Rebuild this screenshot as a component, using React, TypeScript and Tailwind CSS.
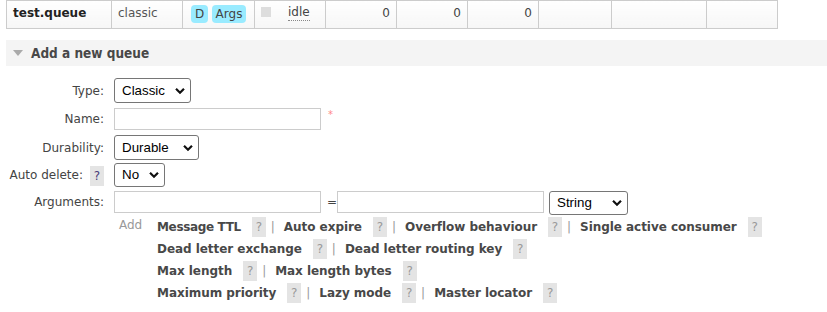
import React from "react";

function Chevron() {
  return (
    <svg width="10" height="7" viewBox="0 0 10 7" className="absolute right-[5px] top-1/2 -translate-y-1/2 pointer-events-none">
      <path d="M1 1.2 L5 5.2 L9 1.2" fill="none" stroke="#111" strokeWidth="2.2" />
    </svg>
  );
}

function Select({ value, w, h = "h-[25px]" }: { value: string; w: string; h?: string }) {
  return (
    <div className={`relative ${w} ${h} border border-[#767676] rounded-[3px] bg-white flex items-center pl-[7px] text-[13.33px] text-black font-['Liberation_Sans',Arial,sans-serif]`}>
      <span>{value}</span>
      <Chevron />
    </div>
  );
}

function Help({ dark }: { dark?: boolean }) {
  return (
    <span
      className={`inline-flex items-center justify-center w-[14px] h-[20px] bg-[#e4e4e4] ${dark ? "text-[#4a3d7a]" : "text-[#999]"} font-normal text-[12px] tracking-normal`}
    >
      ?
    </span>
  );
}

function Sep() {
  return <span className="text-[#999] font-normal ml-[5px] mr-[9px]">|</span>;
}

function Arg({ name, last, tight }: { name: string; last?: boolean; tight?: boolean }) {
  return (
    <>
      <span className={`font-bold text-[#484848] ${tight ? "tracking-[-0.35px]" : "tracking-[-0.05px]"}`}>{name}</span>
      <span className="ml-[11px]">
        <Help />
      </span>
      {!last && <Sep />}
    </>
  );
}

export default function App() {
  const cell = "border border-[#cccccc] align-top pt-[4px] pb-0 px-[6px] leading-[16px]";
  return (
    <div className="w-[827px] h-[312px] bg-white text-[12px] text-[#444] overflow-hidden font-['DejaVu_Sans',Verdana,sans-serif]">
      <div className="pl-[6px]">
        <table className="border-collapse bg-gradient-to-b from-white to-[#f6f6f6]">
          <tbody>
            <tr className="h-[28px]">
              <td className={`${cell} w-[105px] font-bold text-[#222]`}>test.queue</td>
              <td className={`${cell} w-[71px] text-[#555]`}>classic</td>
              <td className={`${cell} w-[71px] !pt-[4px] !px-[8px]`}>
                <div className="flex gap-[4px] leading-[18px]">
                  <span className="bg-[#99ebff] rounded-[4px] w-[17px] text-center text-[#444]">D</span>
                  <span className="bg-[#99ebff] rounded-[4px] w-[34px] text-center text-[#444]">Args</span>
                </div>
              </td>
              <td className={`${cell} w-[71px]`}>
                <div className="flex items-start">
                  <span className="mt-[2px] w-[10px] h-[10px] bg-[#dddddd]" />
                  <span className="ml-[17px] border-b border-dotted border-[#888] leading-[15px]">idle</span>
                </div>
              </td>
              <td className={`${cell} w-[71px] text-right`}>0</td>
              <td className={`${cell} w-[71px] text-right`}>0</td>
              <td className={`${cell} w-[71px] text-right`}>0</td>
              <td className={`${cell} w-[73px]`}></td>
              <td className={`${cell} w-[95px]`}></td>
              <td className={`${cell} w-[71px]`}></td>
            </tr>
          </tbody>
        </table>

        <div className="mt-[11px] h-[26px] bg-[#f4f4f4] flex items-center">
          <svg width="10" height="6" viewBox="0 0 10 6" className="ml-[7px]">
            <path d="M0 0 L10 0 L5 6 Z" fill="#aaaaaa" />
          </svg>
          <span className="ml-[8px] font-bold text-[13.5px] text-[#484848] font-['DejaVu_Sans_Condensed','DejaVu_Sans',sans-serif]">
            Add a new queue
          </span>
        </div>
      </div>

      <div className="mt-[12px]">
        <div className="flex items-center h-[25px]">
          <div className="w-[104px] text-right">Type:</div>
          <div className="ml-[10px]">
            <Select value="Classic" w="w-[77px]" />
          </div>
        </div>
        <div className="flex items-center h-[22px] mt-[5px]">
          <div className="w-[104px] text-right">Name:</div>
          <div className="ml-[10px] w-[207px] h-[22px] border border-[#cccccc] bg-white" />
          <span className="ml-[7px] self-start mt-[2px] text-[#f88] text-[10px] leading-[10px]">*</span>
        </div>
        <div className="flex items-center h-[25px] mt-[5px]">
          <div className="w-[104px] text-right">Durability:</div>
          <div className="ml-[10px]">
            <Select value="Durable" w="w-[85px]" />
          </div>
        </div>
        <div className="flex items-center h-[24px] mt-[3px]">
          <div className="w-[104px] flex items-center justify-end">
            <span>Auto delete:</span>
            <span className="ml-[7px] mt-[2px]">
              <Help dark />
            </span>
          </div>
          <div className="ml-[10px]">
            <Select value="No" w="w-[51px]" h="h-[24px]" />
          </div>
        </div>
        <div className="flex items-start h-[24px] mt-[4px]">
          <div className="w-[104px] text-right leading-[22px]">Arguments:</div>
          <div className="ml-[10px] w-[207px] h-[22px] border border-[#cccccc] bg-white" />
          <span className="ml-[6px] w-[10px] leading-[22px] text-[#444]">=</span>
          <div className="w-[207px] h-[22px] border border-[#cccccc] bg-white" />
          <div className="ml-[5px]">
            <Select value="String" w="w-[79px]" h="h-[24px]" />
          </div>
        </div>

        <div className="flex mt-[1px]">
          <div className="w-[119px]" />
          <div className="w-[38px] text-[#999] leading-[20px] -mt-[1px]">Add</div>
          <div className="flex flex-col">
            <div className="flex items-center h-[22px]">
              <Arg name="Message TTL" tight />
              <Arg name="Auto expire" />
              <Arg name="Overflow behaviour" />
              <Arg name="Single active consumer" last />
            </div>
            <div className="flex items-center h-[22px]">
              <Arg name="Dead letter exchange" />
              <Arg name="Dead letter routing key" last />
            </div>
            <div className="flex items-center h-[22px]">
              <Arg name="Max length" />
              <Arg name="Max length bytes" last />
            </div>
            <div className="flex items-center h-[22px]">
              <Arg name="Maximum priority" />
              <Arg name="Lazy mode" />
              <Arg name="Master locator" last />
            </div>
          </div>
        </div>
      </div>
    </div>
  );
}
